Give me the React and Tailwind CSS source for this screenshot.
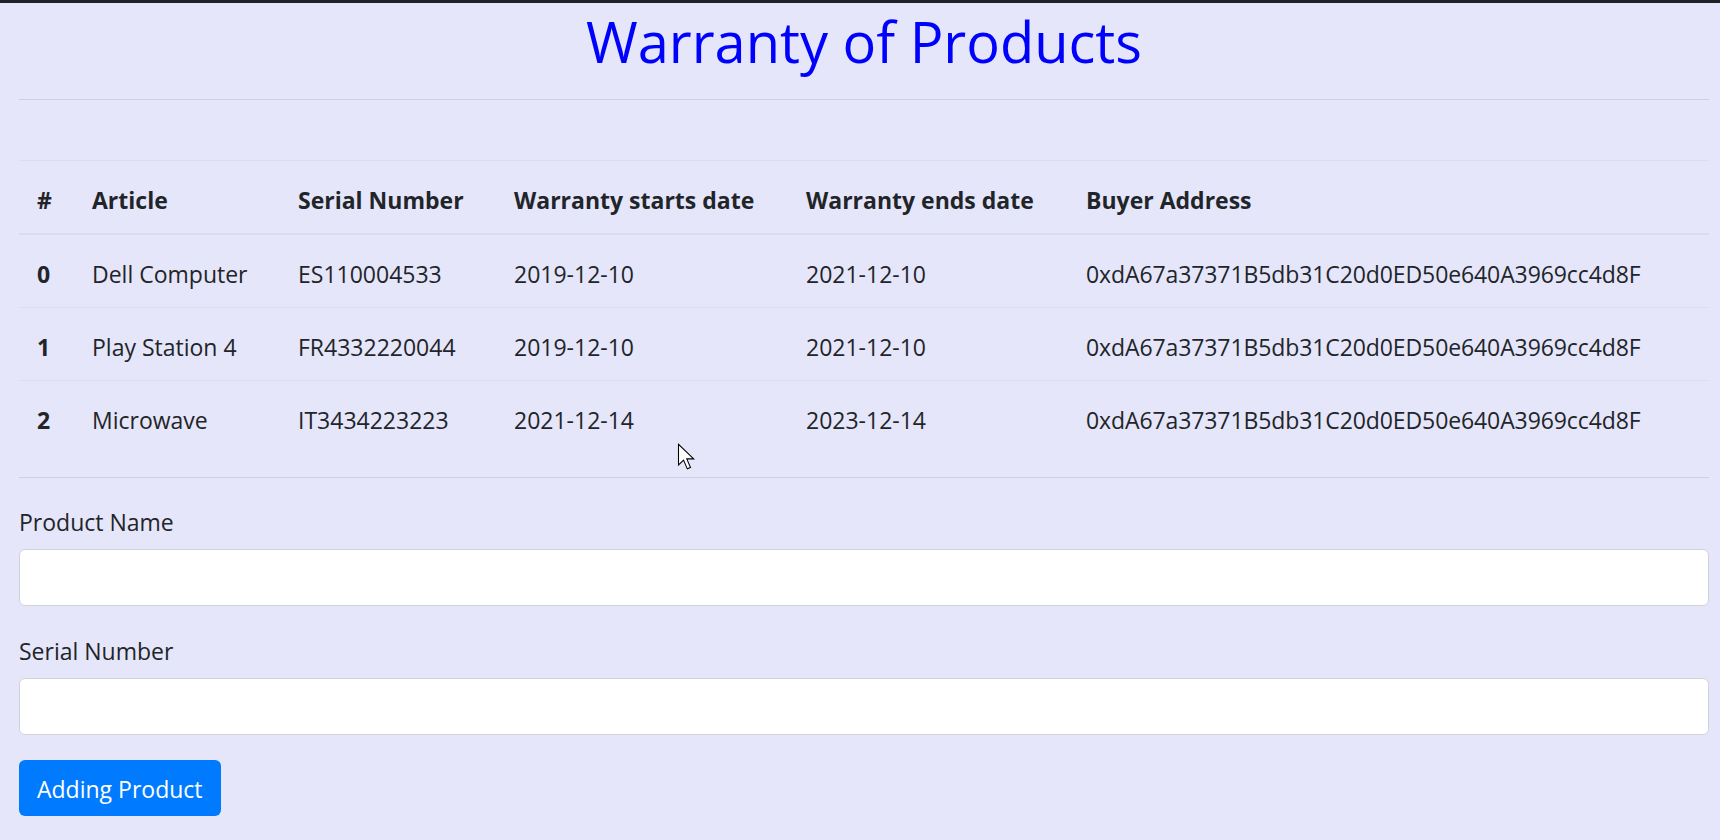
import React from 'react';

const rows = [
  { id: 0, article: 'Dell Computer', serial: 'ES110004533', start: '2019-12-10', end: '2021-12-10', buyer: '0xdA67a37371B5db31C20d0ED50e640A3969cc4d8F' },
  { id: 1, article: 'Play Station 4', serial: 'FR4332220044', start: '2019-12-10', end: '2021-12-10', buyer: '0xdA67a37371B5db31C20d0ED50e640A3969cc4d8F' },
  { id: 2, article: 'Microwave', serial: 'IT3434223223', start: '2021-12-14', end: '2023-12-14', buyer: '0xdA67a37371B5db31C20d0ED50e640A3969cc4d8F' },
];

function Cursor() {
  return (
    <svg className="absolute left-[677px] top-[443px]" width="19" height="28" viewBox="0 0 14 21">
      <path d="M1 1 L1 16.5 L4.8 12.8 L7.6 19.4 L10 18.4 L7.2 11.9 L12.4 11.9 Z" fill="#fff" stroke="#000" strokeWidth="0.8" strokeLinejoin="miter" />
    </svg>
  );
}

export default function App() {
  return (
    <div className="relative min-h-screen bg-[#e6e6fa] font-['Open_Sans',sans-serif] text-[23px] leading-[36px] text-[#212529]">
      <div className="h-[3px] bg-[#202124]"></div>
      <div className="pl-[19px] pr-[11px]">
        <h1 className="pt-[5px] text-center text-[56px] leading-[67px] font-normal text-[#0000ff]">Warranty of Products</h1>
        <hr className="mt-[24px] mb-[24px] border-t border-[#cfcfe1]" />
        <div className="h-[36px]"></div>

        <table className="w-full table-fixed border-collapse mb-[24px]">
          <thead>
            <tr>
              <th className="w-[55px] text-left font-bold px-[18px] pt-[21px] pb-[15px] border-t border-[#dcdde6] border-b-2 border-b-[#dcdde6]">#</th>
              <th className="w-[206px] text-left font-bold px-[18px] pt-[21px] pb-[15px] border-t border-[#dcdde6] border-b-2 border-b-[#dcdde6]">Article</th>
              <th className="w-[216px] text-left font-bold px-[18px] pt-[21px] pb-[15px] border-t border-[#dcdde6] border-b-2 border-b-[#dcdde6]">Serial Number</th>
              <th className="w-[292px] text-left font-bold px-[18px] pt-[21px] pb-[15px] border-t border-[#dcdde6] border-b-2 border-b-[#dcdde6]">Warranty starts date</th>
              <th className="w-[280px] text-left font-bold px-[18px] pt-[21px] pb-[15px] border-t border-[#dcdde6] border-b-2 border-b-[#dcdde6]">Warranty ends date</th>
              <th className="text-left font-bold px-[18px] pt-[21px] pb-[15px] border-t border-[#dcdde6] border-b-2 border-b-[#dcdde6]">Buyer Address</th>
            </tr>
          </thead>
          <tbody>
            {rows.map((r) => (
              <tr key={r.id}>
                <th className="text-left font-bold px-[18px] pt-[21px] pb-[15px] border-t border-[#dcdde6]">{r.id}</th>
                <td className="px-[18px] pt-[21px] pb-[15px] border-t border-[#dcdde6] whitespace-nowrap">{r.article}</td>
                <td className="px-[18px] pt-[21px] pb-[15px] border-t border-[#dcdde6]">{r.serial}</td>
                <td className="px-[18px] pt-[21px] pb-[15px] border-t border-[#dcdde6]">{r.start}</td>
                <td className="px-[18px] pt-[21px] pb-[15px] border-t border-[#dcdde6]">{r.end}</td>
                <td className="px-[18px] pt-[21px] pb-[15px] border-t border-[#dcdde6] tracking-[-0.1px]">{r.buyer}</td>
              </tr>
            ))}
          </tbody>
        </table>

        <hr className="mb-[24px] border-t border-[#cfcfe1]" />

        <form onSubmit={(e) => e.preventDefault()}>
          <div className="mb-[25px]">
            <label className="block pt-[2px] h-[36px] mb-[11px]">Product Name</label>
            <input type="text" className="block w-full h-[57px] bg-white border border-[#ced4da] rounded-[6px] px-[18px] outline-none" />
          </div>
          <div className="mb-[25px]">
            <label className="block pt-[2px] h-[36px] mb-[11px]">Serial Number</label>
            <input type="text" className="block w-full h-[57px] bg-white border border-[#ced4da] rounded-[6px] px-[18px] outline-none" />
          </div>
          <button type="submit" className="h-[56px] px-[18px] pt-[2px] rounded-[6px] bg-[#007bff] text-white">Adding Product</button>
        </form>

        <hr className="mt-[24px] border-t border-[#cfcfe1]" />
      </div>
      <Cursor />
    </div>
  );
}
